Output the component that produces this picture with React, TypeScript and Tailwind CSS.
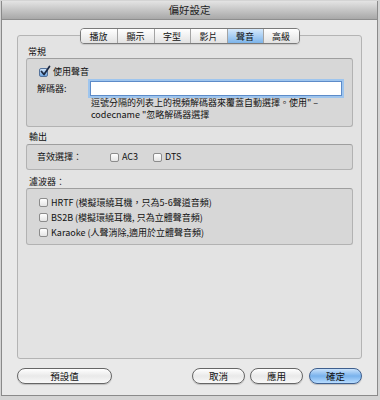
import React from "react";

const F = "font-['Noto_Sans_CJK_TC','Liberation_Sans',sans-serif]";

function Check({ checked }: { checked?: boolean }) {
  return (
    <span
      className={
        "relative inline-block w-[9px] h-[9px] shrink-0 rounded-[2px] border " +
        (checked
          ? "border-[#55739c] bg-gradient-to-b from-[#cfe3f8] to-[#6fa7e4]"
          : "border-[#8c8c8c] bg-gradient-to-b from-white to-[#e4e4e4]")
      }
    >
      {checked && (
        <svg className="absolute -top-[4px] -left-[1px] w-[12px] h-[12px]" viewBox="0 0 12 12">
          <path d="M2.5 6.5 L5 9.5 L10.5 1.5" stroke="#1c2a44" strokeWidth="1.8" fill="none" strokeLinecap="round" strokeLinejoin="round" />
        </svg>
      )}
    </span>
  );
}

const tabs = [
  { t: "播放", w: "w-[36px]" },
  { t: "顯示", w: "w-[37px]" },
  { t: "字型", w: "w-[36px]" },
  { t: "影片", w: "w-[37px]" },
  { t: "聲音", w: "w-[36px]", sel: true },
  { t: "高級", w: "w-[36px]" },
];

function Btn({ label, w, blue }: { label: string; w: string; blue?: boolean }) {
  return (
    <div
      className={
        w +
        " h-[16px] rounded-full border flex items-center justify-center text-[9.5px] text-[#111] shadow-[0_1px_1px_rgba(0,0,0,0.18)] " +
        (blue
          ? "border-[#3f5f8e] bg-gradient-to-b from-[#c9e2fb] via-[#79b2ec] to-[#b7dcff]"
          : "border-[#666] bg-gradient-to-b from-white via-[#e9e9e9] to-[#f9f9f9]")
      }
    >
      {label}
    </div>
  );
}

export default function App() {
  return (
    <div className={"w-[380px] h-[400px] bg-[#d4d4d4] pt-[1px] pl-[1px] " + F}>
      <div className="w-[377px] h-[395px] flex flex-col border border-t-0 border-[#8a8a8a] bg-[#e9e9e9]">
        <div className="h-[19px] shrink-0 bg-gradient-to-b from-[#e4e4e4] to-[#a8a8a8] border-b border-[#8e8e8e] flex items-center justify-center text-[10.5px] leading-none text-[#1e1e1e]">
          偏好設定
        </div>
        <div className="flex-1 flex flex-col px-[15px] pt-[8px]">
          <div className="relative z-10 flex justify-center">
            <div className="flex h-[16px] rounded-[4px] border border-[#7a7a7a] overflow-hidden shadow-[0_1px_1px_rgba(0,0,0,0.12)]">
              {tabs.map((x, i) => (
                <div
                  key={x.t}
                  className={
                    x.w +
                    " h-full flex items-center justify-center text-[9px] leading-none text-[#111] " +
                    (i > 0 ? "border-l border-[#a3a3a3] " : "") +
                    (x.sel
                      ? "bg-gradient-to-b from-[#d6e9fb] to-[#7cb4ea]"
                      : "bg-gradient-to-b from-white to-[#e2e2e2]")
                  }
                >
                  {x.t}
                </div>
              ))}
            </div>
          </div>
          <div className="-mt-[9px] h-[324px] shrink-0 rounded-[3px] border border-[#b4b4b4] bg-[#e3e3e3] px-[8px] pt-[10px] text-[9px] text-[#111]">
            <div className="h-[12px] leading-[12px] pl-[2px]">常規</div>
            <div className="h-[69px] rounded-[3px] border border-[#b2b2b2] border-t-[#9e9e9e] bg-[#d7d7d7] pl-[10px] pr-[10px] pt-[7px]">
              <div className="h-[12px] flex items-center gap-[5px] pl-[2px]">
                <Check checked />
                <span>使用聲音</span>
              </div>
              <div className="mt-[3px] flex items-center h-[15px]">
                <span className="w-[53px] shrink-0">解碼器:</span>
                <div className="flex-1 h-[15px] bg-white border border-[#5d8bc8] shadow-[0_0_0_2px_#9ec5ee]" />
              </div>
              <div className="ml-[54px] leading-[12px] mt-[1px]">
                逗號分隔的列表上的視頻解碼器來覆蓋自動選擇。使用" –<br />
                codecname "忽略解碼器選擇
              </div>
            </div>
            <div className="mt-[4px] h-[12px] leading-[12px] pl-[3px]">輸出</div>
            <div className="mt-[1px] h-[26px] rounded-[3px] border border-[#b2b2b2] border-t-[#9e9e9e] bg-[#d7d7d7] pl-[10px] flex items-center">
              <span className="w-[73px] shrink-0">音效選擇：</span>
              <Check />
              <span className="ml-[3px] w-[31px]">AC3</span>
              <Check />
              <span className="ml-[3px]">DTS</span>
            </div>
            <div className="mt-[6px] h-[12px] leading-[12px] pl-[3px]">濾波器：</div>
            <div className="h-[57px] rounded-[3px] border border-[#b2b2b2] border-t-[#9e9e9e] bg-[#d7d7d7] pl-[12px] pt-[6px]">
              {[
                "HRTF (模擬環繞耳機，只為5-6聲道音頻)",
                "BS2B (模擬環繞耳機, 只為立體聲音頻)",
                "Karaoke (人聲消除,適用於立體聲音頻)",
              ].map((t) => (
                <div key={t} className="h-[15px] flex items-center gap-[3px]">
                  <Check />
                  <span>{t}</span>
                </div>
              ))}
            </div>
          </div>
          <div className="mt-[9px] flex items-center">
            <Btn label="預設值" w="w-[95px]" />
            <div className="flex-1" />
            <Btn label="取消" w="w-[53px]" />
            <div className="w-[5px]" />
            <Btn label="應用" w="w-[53px]" />
            <div className="w-[6px]" />
            <Btn label="確定" w="w-[53px]" blue />
          </div>
        </div>
      </div>
    </div>
  );
}
